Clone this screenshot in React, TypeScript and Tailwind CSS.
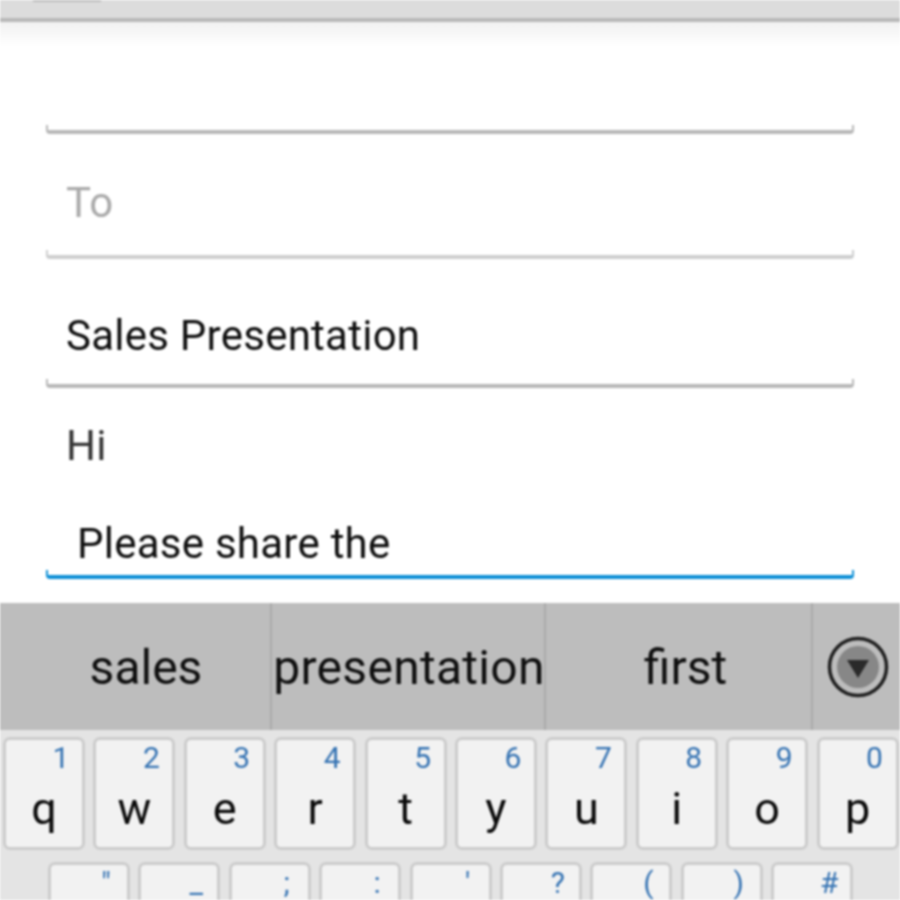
import React from 'react';

const rowOne = [
  ['q', '1'], ['w', '2'], ['e', '3'], ['r', '4'], ['t', '5'],
  ['y', '6'], ['u', '7'], ['i', '8'], ['o', '9'], ['p', '0'],
];
const rowTwo = ['"', '_', ';', ':', "'", '?', '(', ')', '#'];

const Underline = ({ tone = 'border-[#b8b8b8]' }: { tone?: string }) => (
  <div className={`h-[9px] rounded-b-[4px] border-x-[2px] border-b-[4px] ${tone}`} />
);

const Key = ({ label, hint }: { label?: string; hint: string }) => (
  <div className="relative h-[113px] w-[82px] shrink-0 rounded-[7px] border-[3px] border-[#cccccc] bg-[#f2f2f2]">
    <span className="absolute right-[6px] top-[0px] w-[30px] text-center text-[30px] leading-[36px] text-[#3573b3]">{hint}</span>
    {label && (
      <span className="absolute inset-x-0 top-[44px] text-center text-[45px] leading-[50px] text-[#0a0a0a]">{label}</span>
    )}
  </div>
);

export default function App() {
  return (
    <div className="h-[900px] w-[900px] overflow-hidden bg-white font-['Roboto',sans-serif] blur-[1px]">
      {/* action bar */}
      <div className="h-[22px] border-b-[4px] border-[#b8b8b8] bg-[#dcdcdc] pl-[33px]">
        <div className="h-[2px] w-[68px] bg-[#bcbcbc]" />
      </div>
      <div className="h-[24px] bg-gradient-to-b from-[#f1f1f1] to-white" />

      {/* form */}
      <div className="flex h-[557px] flex-col px-[46px] tracking-[0.25px]">
        <div className="h-[88px] pt-[79px]">
          <Underline />
        </div>
        <div className="flex h-[125px] flex-col justify-end">
          <div className="h-[70px] pl-[20px] text-[42px] leading-[46px] text-[#aaaaaa]">To</div>
          <Underline tone="border-[#cfcfcf]" />
        </div>
        <div className="flex h-[129px] flex-col justify-end">
          <div className="h-[66px] pl-[20px] text-[42px] leading-[46px] text-[#0f0f0f]">Sales Presentation</div>
          <Underline />
        </div>
        <div className="flex h-[191px] flex-col justify-end">
          <div className="pl-[20px] text-[42px] leading-[46px] text-[#333]">Hi</div>
          <div className="mt-[52px] h-[49px] pl-[31px] text-[42px] leading-[46px] text-[#0f0f0f]">Please share the</div>
          <Underline tone="border-[#0d8fd6]" />
        </div>
      </div>

      {/* suggestions */}
      <div className="flex h-[127px] items-center bg-[#bdbdbd] text-[48px] text-[#0f0f0f]">
        <div className="flex h-full w-[272px] items-center justify-center border-r-[2px] border-[#aaa] pl-[22px] pt-[3px]">sales</div>
        <div className="flex h-full w-[274px] items-center justify-center border-r-[2px] border-[#aaa] pl-[2px] pt-[3px] tracking-[0.3px]">presentation</div>
        <div className="flex h-full w-[267px] items-center justify-center border-r-[2px] border-[#aaa] pl-[14px] pt-[3px]">first</div>
        <div className="flex h-full flex-1 items-center justify-center pl-[2px]">
          <svg width="64" height="64" viewBox="0 0 64 64">
            <circle cx="32" cy="32" r="28.5" fill="#bdbdbd" stroke="#1f1f1f" strokeWidth="3.5" />
            <circle cx="32" cy="32" r="21" fill="#878787" />
            <path d="M21 25H43L32 43Z" fill="#2a2a2a" />
          </svg>
        </div>
      </div>

      {/* keyboard */}
      <div className="flex flex-col gap-[12px] bg-[#e4e4e4] pt-[7px]">
        <div className="flex gap-[8.4px] pl-[3px]">
          {rowOne.map(([label, hint]) => (
            <Key key={label} label={label} hint={hint} />
          ))}
        </div>
        <div className="flex gap-[8.4px] pl-[48px]">
          {rowTwo.map((hint) => (
            <Key key={hint} hint={hint} />
          ))}
        </div>
      </div>
    </div>
  );
}
